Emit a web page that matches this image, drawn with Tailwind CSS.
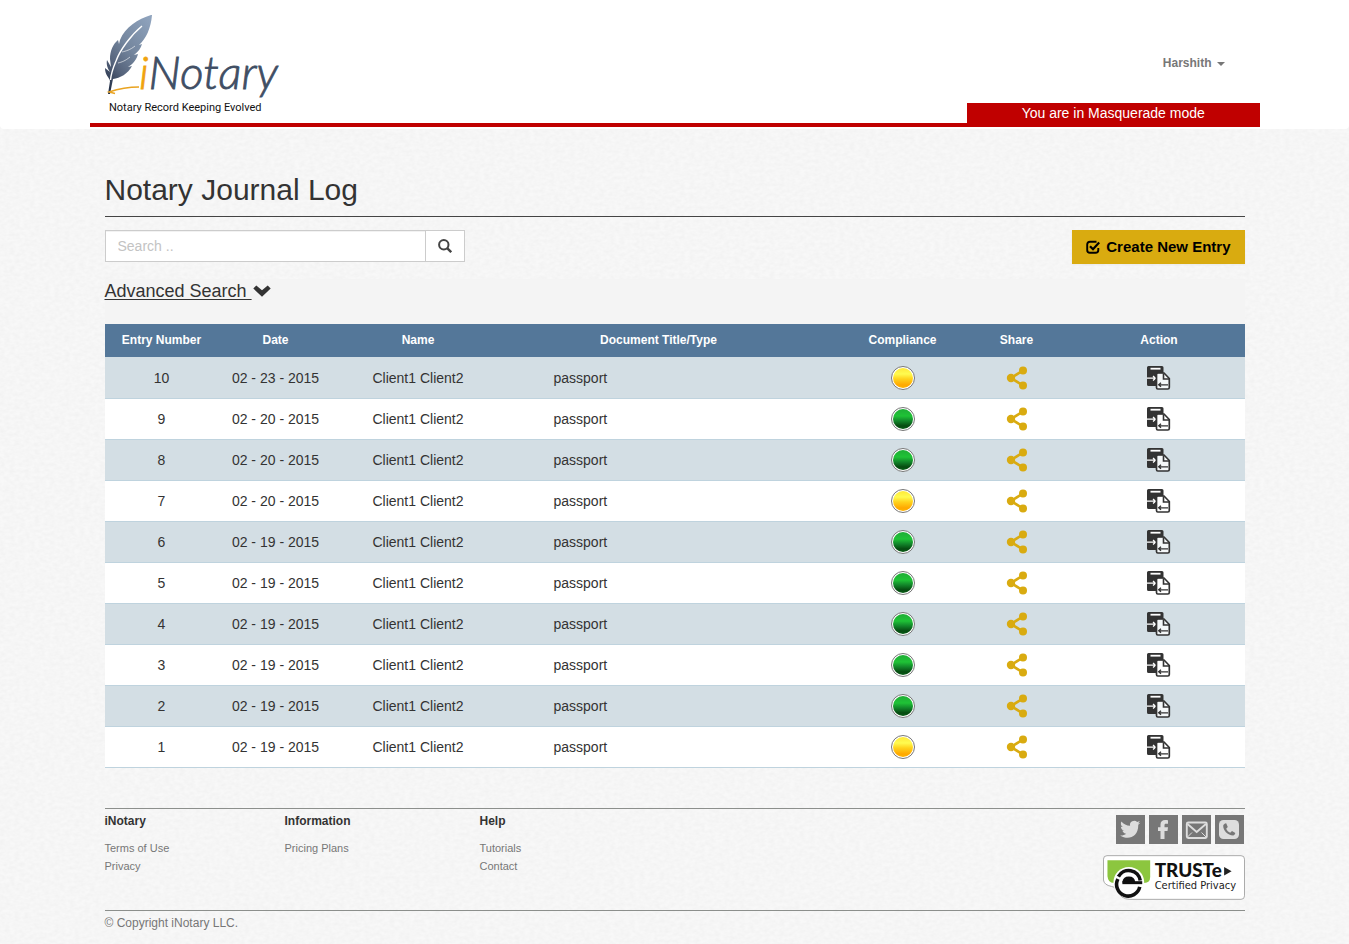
<!DOCTYPE html>
<html lang="en">
<head>
<meta charset="utf-8">
<meta name="viewport" content="width=device-width, initial-scale=1">
<title>Notary Journal Log</title>
<script src="https://cdn.jsdelivr.net/npm/@tailwindcss/browser@4"></script>
</head>
<body class="relative isolate min-h-screen bg-[#f8f8f8] font-['Liberation_Sans',Arial,sans-serif] text-sm leading-5 text-[#333]">

<!-- paper grain -->
<svg class="absolute inset-0 -z-10 h-full w-full" aria-hidden="true">
  <filter id="grain"><feTurbulence type="fractalNoise" baseFrequency="0.2 0.3" numOctaves="2" seed="4"/><feColorMatrix values="0 0 0 0 0  0 0 0 0 0  0 0 0 0 0  0.04 0 0 0 -0.01"/></filter>
  <rect width="100%" height="100%" filter="url(#grain)"/>
</svg>

<!-- shared icons -->
<svg class="absolute h-0 w-0" aria-hidden="true">
  <defs>
    <linearGradient id="yellow" x1="0" y1="0" x2="0" y2="1"><stop offset="0" stop-color="#ffe93a"/><stop offset=".3" stop-color="#fffb50"/><stop offset=".55" stop-color="#ffd21c"/><stop offset=".85" stop-color="#ffa800"/><stop offset="1" stop-color="#ffb400"/></linearGradient>
    <linearGradient id="green" x1="0" y1="0" x2="0" y2="1"><stop offset="0" stop-color="#1fae36"/><stop offset=".35" stop-color="#1fc236"/><stop offset=".6" stop-color="#12852a"/><stop offset=".85" stop-color="#064a10"/><stop offset="1" stop-color="#0a6018"/></linearGradient>
  </defs>
  <symbol id="share" viewBox="0 0 22 24"><path d="M17 4.500 5 12l12 7.500" fill="none" stroke="#d9ab10" stroke-width="2.600"/><circle cx="17" cy="4.500" r="4" fill="#d9ab10"/><circle cx="5" cy="12" r="4.200" fill="#d9ab10"/><circle cx="17" cy="19.500" r="4" fill="#d9ab10"/></symbol>
  <symbol id="copy" viewBox="0 0 24 24">
    <path d="M1.500 0H15q1.500 0 1.500 1.500V8H9v12H1.500Q0 20 0 18.500v-17Q0 0 1.500 0z" fill="#333"/>
    <path d="M3.500 2.700h10" stroke="#fff" stroke-width="1.800"/>
    <path d="M0 12.200h8M6 10l2.500 2.200L6 14.400" stroke="#fff" stroke-width="1.300" fill="none"/>
    <path d="M11 7h6l5.300 5.500v9q0 1.500-1.500 1.500h-10q-1.300 0-1.300-1.500V8.500Q9.500 7 11 7z" fill="#fff" fill-opacity=".75" stroke="#333" stroke-width="1.700"/>
    <path d="M16.500 7.500V13h5.500" fill="none" stroke="#333" stroke-width="1.600"/>
    <path d="M21 18.800h-9M14 16.800l-2.300 2 2.300 2" fill="none" stroke="#333" stroke-width="1.300"/>
  </symbol>
</svg>

<header class="rounded-b bg-white pb-0.5">
  <div class="mx-auto flex max-w-[1170px] items-end justify-between border-b-4 border-[#c00000]">
    <a href="#" class="ml-[15px] block w-[180px] shrink-0" aria-label="iNotary, Notary Record Keeping Evolved">
      <svg class="h-[123px] w-[180px]" viewBox="0 0 180 123">
        <defs><linearGradient id="quill" x1="0.9" y1="0" x2="0.2" y2="1"><stop offset="0" stop-color="#8fa3bd"/><stop offset=".45" stop-color="#75879f"/><stop offset=".75" stop-color="#56647c"/><stop offset="1" stop-color="#27334a"/></linearGradient></defs>
        <path d="M46 15C33 19 20 27 15 40l-1 4-1-4C8 44 5 51 5 59l1 8-4-7c-1 5 1 9 3 12l-5-4c0 7 4 9 5 13l-2 13h2l3-15c7-1 15-5 19-13l-4 1c5-3 9-8 10-13l-4 1c4-3 7-7 8-11l-3 1c7-6 12-17 13-30z" fill="url(#quill)"/>
        <path d="M37 26C26 35 15 50 11 61 8 68 6 74 5.500 80" fill="none" stroke="#fff" stroke-width="1.400"/>
        <path d="M30 46c-5 4-9 5-13 6M25 57c-5 4-8 5-12 6" fill="none" stroke="#fff" stroke-width=".6"/>
        <path d="M34 87c-9 0-18 1-30 5l6 1.500" fill="none" stroke="#e9a320" stroke-width="1.400"/>
        <text x="34" y="89" font-family="Lato, 'Liberation Sans', sans-serif" font-size="46" font-style="italic" font-weight="300" fill="#3f4e64" stroke="#3f4e64" stroke-width=".8"><tspan fill="#f0a30e" stroke="#f0a30e">i</tspan>Notary</text>
        <text x="4" y="111" font-family="Roboto, 'Liberation Sans', sans-serif" font-size="11" fill="#111">Notary Record Keeping Evolved</text>
      </svg>
    </a>
    <div class="flex w-1/4 flex-col">
      <button type="button" class="mr-[35px] mb-[30px] flex items-center gap-[5px] self-end text-xs leading-5 font-bold text-[#777]">Harshith <span class="mt-0.5 border-x-4 border-t-4 border-x-transparent border-t-[#777]"></span></button>
      <p class="bg-[#c00000] text-center text-white">You are in Masquerade mode</p>
    </div>
  </div>
</header>

<main class="mx-auto max-w-[1170px] px-[15px] pt-11">
  <h1 class="border-b border-[#444] pb-2.5 text-3xl leading-[33px]">Notary Journal Log</h1>
  <div class="mt-[13px] flex items-start justify-between">
    <form class="flex h-8 w-[360px]" role="search">
      <input type="text" aria-label="Search" placeholder="Search .." class="min-w-0 flex-1 border border-[#ccc] bg-white px-3 text-sm inset-shadow-2xs placeholder:text-[#c3c3c3]">
      <button type="button" aria-label="Search" class="flex w-[39px] items-center justify-center border border-l-0 border-[#ccc] bg-white">
        <svg class="h-3.5 w-3.5" viewBox="0 0 14 14" fill="none" stroke="#444"><circle cx="5.800" cy="5.800" r="4.700" stroke-width="2"/><path d="m9.200 9.200 4 4" stroke-width="2.400"/></svg>
      </button>
    </form>
    <button type="button" class="flex h-[34px] items-center gap-1.5 bg-[#d9ab10] px-3.5 text-[15px] font-bold text-black shadow-xs">
      <svg class="h-3.5 w-3.5" viewBox="0 0 14 14" fill="none" stroke="#000"><path d="M10.500 1.700H4Q1.200 1.700 1.200 4.500V10q0 2.800 2.800 2.800h5.500q2.800 0 2.800-2.800V8" stroke-width="1.900"/><path d="m4 6.200 3 3 6.200-6.700" stroke-width="2.300"/></svg>
      Create New Entry
    </button>
  </div>
  <section class="mt-[15px] bg-[#f4f4f4]">
    <div class="h-[45px]">
      <button type="button" class="flex items-center text-lg leading-6"><span class="pr-[5px] underline decoration-1 underline-offset-2">Advanced Search&nbsp;</span>
        <svg class="-ml-1 h-3 w-[18px]" viewBox="0 0 18 12"><path d="M3.300 0.500 9 5.300 14.700 0.500 17.700 3.500 9 11.700 0.300 3.500z" fill="#333"/></svg>
      </button>
    </div>
    <table class="w-full table-fixed border-separate border-spacing-0 text-center">
      <thead class="bg-[#547799] text-xs text-white">
        <tr class="h-[34px] [&>th]:border-b [&>th]:border-[#d3dee4] [&>th]:bg-clip-padding [&>th]:pb-0.5">
          <th class="w-[10%]">Entry Number</th><th class="w-[10%]">Date</th><th class="w-[15%]">Name</th><th class="w-[30%] pr-8">Document Title/Type</th><th class="w-[10%]">Compliance</th><th class="w-[10%]">Share</th><th class="w-[15%]">Action</th>
        </tr>
      </thead>
      <tbody id="entries"></tbody>
    </table>
  </section>
</main>

<footer class="mx-auto mt-10 max-w-[1170px] px-[15px] text-[#777]">
  <div class="flex h-[102px] justify-between border-t border-[#8c8f8c]">
    <div class="flex text-[11px] leading-[18px]">
      <nav class="w-[180px] pt-0.5"><h2 class="mb-2 text-xs leading-5 font-bold text-[#333]">iNotary</h2><a href="#" class="block">Terms of Use</a><a href="#" class="block">Privacy</a></nav>
      <nav class="w-[195px] pt-0.5"><h2 class="mb-2 text-xs leading-5 font-bold text-[#333]">Information</h2><a href="#" class="block">Pricing Plans</a></nav>
      <nav class="pt-0.5"><h2 class="mb-2 text-xs leading-5 font-bold text-[#333]">Help</h2><a href="#" class="block">Tutorials</a><a href="#" class="block">Contact</a></nav>
    </div>
    <div class="flex flex-col items-end pt-1.5">
      <div class="mr-px flex gap-1">
        <a href="#" aria-label="Twitter" class="h-[29px] w-[29px] bg-[#777]"><svg viewBox="0 0 29 29"><path transform="translate(-1.500 -1.500) scale(1.080)" d="M24 8.500c-.7.300-1.400.5-2.200.6.800-.5 1.300-1.200 1.600-2.100-.7.400-1.500.7-2.400.9a3.900 3.900 0 0 0-6.600 3.500C11.200 11.200 8.300 9.700 6.400 7.300c-1 1.800-.5 4 1.200 5.200-.6 0-1.200-.2-1.700-.5 0 1.900 1.300 3.500 3.100 3.900-.6.100-1.200.2-1.700.1.500 1.500 1.900 2.600 3.600 2.700-1.600 1.200-3.600 1.800-5.700 1.600C12 24.800 22 22.600 22 10.900v-.5c.8-.5 1.500-1.200 2-1.900z" fill="#ddd"/></svg></a>
        <a href="#" aria-label="Facebook" class="h-[29px] w-[29px] bg-[#777]"><svg viewBox="0 0 29 29"><path d="M19 5.200v3.600h-2c-1.300 0-1.500.6-1.500 1.500v2H19l-.5 3.700h-3V24h-4v-8H9v-3.700h2.500V9.500c0-3 1.800-4.500 4.600-4.500 1.300 0 2.400.1 2.900.2z" fill="#ddd"/></svg></a>
        <a href="#" aria-label="Email" class="h-[29px] w-[29px] bg-[#777]"><svg viewBox="0 0 29 29" fill="none" stroke="#ddd" stroke-width="1.900"><rect x="4.800" y="7.500" width="20" height="15.500" rx="1.500"/><path d="m5.500 9 9.200 8 9.200-8"/><path d="m5.500 22 4.500-4.500M24 22l-4.500-4.500" stroke-width="1"/></svg></a>
        <a href="#" aria-label="Phone" class="h-[29px] w-[29px] bg-[#777]"><svg viewBox="0 0 29 29"><rect x="4" y="5" width="20" height="19" rx="4.500" fill="#ddd"/><path d="M10 8.500 8.300 10c-.8 5 4.500 10.500 9.800 10.500 1 0 1.900-1.200 2.200-2.500l-3.300-2-1.800 1.700c-1.800-.8-3.200-2.200-4-4l1.600-1.600L11.200 8.300z" fill="#777"/></svg></a>
      </div>
      <a href="#" aria-label="TRUSTe Certified Privacy" class="mt-[11px] block h-[46px] w-[142px]">
        <svg class="h-[46px] w-[142px]" viewBox="0 0 143 46">
          <path d="M4 .5h135q3.500 0 3.500 3.500v37q0 3.500-3.500 3.500H27q-9 0-13.500-9.500Q12 31.500 8.500 31.500 1 30 .5 25V4Q.5.5 4 .5z" fill="#fff" stroke="#aaa"/>
          <path d="M4.500 5h43v17q0 6-6 6H11q-6 0-6.500-7z" fill="#8cc63f"/>
          <circle cx="26" cy="27.500" r="15.500" fill="#fff"/>
          <path d="M15.500 21.500A11.800 11.800 0 0 1 37.500 25.500M37 32A11.800 11.800 0 1 1 15 24" fill="none" stroke="#111" stroke-width="3.600"/>
          <path d="M19.500 27.500q.5-6 6.500-6t6.500 6z" fill="#111"/><path d="M19.500 27.700h20" stroke="#111" stroke-width="3"/>
          <text x="52" y="22.500" font-family="Lato, sans-serif" font-size="19" font-weight="900" fill="#111">TRUSTe</text>
          <path d="m122 12 7.500 4.200-7.500 4.300z" fill="#222"/>
          <text x="52" y="34" font-family="'DejaVu Sans', sans-serif" font-size="10" fill="#222">Certified Privacy</text>
        </svg>
      </a>
    </div>
  </div>
  <p class="border-t border-[#8c8f8c] pt-0.5 text-xs leading-5">© Copyright iNotary LLC.</p>
</footer>

<script>
const rows = [
  [10, '02 - 23 - 2015', 'yellow'], [9, '02 - 20 - 2015', 'green'], [8, '02 - 20 - 2015', 'green'],
  [7, '02 - 20 - 2015', 'yellow'], [6, '02 - 19 - 2015', 'green'], [5, '02 - 19 - 2015', 'green'],
  [4, '02 - 19 - 2015', 'green'], [3, '02 - 19 - 2015', 'green'], [2, '02 - 19 - 2015', 'green'], [1, '02 - 19 - 2015', 'yellow']
];
document.getElementById('entries').innerHTML = rows.map(([n, date, status]) => `
  <tr class="h-[41px] odd:bg-[#d3dee4] even:bg-white [&>td]:border-b [&>td]:border-[#bfd3de]">
    <td>${n}</td><td>${date}</td><td>Client1 Client2</td><td class="pl-[50px] text-left">passport</td>
    <td><svg class="mx-auto h-6 w-6" viewBox="0 0 24 24" role="img" aria-label="${status}"><circle cx="12" cy="12" r="11.500" fill="#fff" stroke="#777"/><circle cx="12" cy="12" r="10" fill="url(#${status})"/></svg></td>
    <td><button type="button" class="block mx-auto" aria-label="Share entry ${n}"><svg class="h-6 w-[22px]"><use href="#share"/></svg></button></td>
    <td><button type="button" class="block mx-auto" aria-label="Copy entry ${n}"><svg class="h-6 w-6"><use href="#copy"/></svg></button></td>
  </tr>`).join('');
</script>
</body>
</html>
